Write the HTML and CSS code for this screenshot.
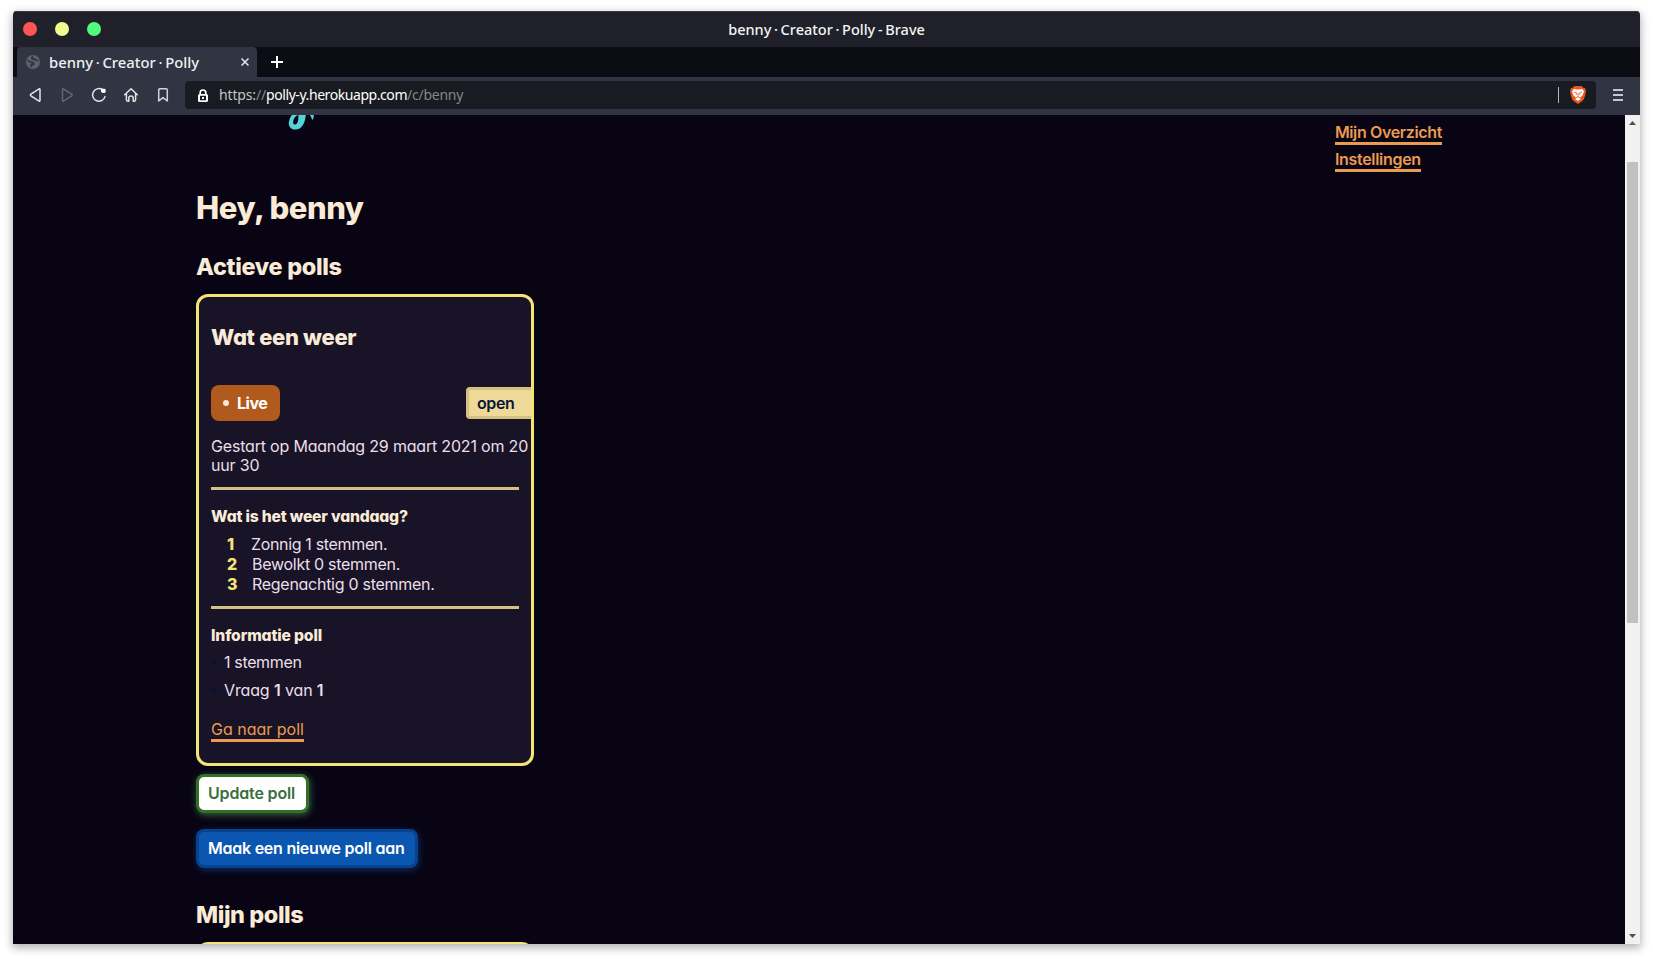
FILE: index.html
```html
<!DOCTYPE html>
<html lang="nl">
<head>
<meta charset="utf-8">
<title>benny · Creator · Polly</title>
<link rel="stylesheet" href="styles.css">
</head>
<body>
<div class="window">
  <div class="titlebar">
    <div class="lights"><i class="light red"></i><i class="light yellow"></i><i class="light green"></i></div>
    <div class="window-title">benny · Creator · Polly - Brave</div>
  </div>
  <div class="tabstrip">
    <div class="tab">
      <svg class="globe" width="14" height="14" viewBox="0 0 14 14"><circle cx="7" cy="7" r="7" fill="#5f6368"/><path d="M1.6 5.2Q4 7.6 6.6 7.3Q8 7.6 7.6 9.2L5.3 9.6V12.2M7.2 1.6Q5.2 2.6 6 3.8Q7.4 4.6 8.6 4Q9.4 5.8 12.4 5.6" fill="none" stroke="#313442" stroke-width="1.8"/></svg>
      <span class="tab-title">benny · Creator · Polly</span>
      <svg class="close" width="8" height="8" viewBox="0 0 8 8"><path d="M.5.5l7 7M7.5.5l-7 7" stroke="#e8e8ea" stroke-width="1.5"/></svg>
    </div>
    <svg class="plus" width="12" height="12" viewBox="0 0 12 12"><path d="M6 0v12M0 6h12" stroke="#fff" stroke-width="2"/></svg>
  </div>
  <div class="toolbar">
    <div class="tools">
      <svg width="16" height="16" viewBox="0 0 16 16"><path d="M12.100 1.800q.9-.4.9.6v11.200q0 1-.9.6L3.900 8.800q-1-.8 0-1.600z" fill="none" stroke="#e4e4e6" stroke-width="1.5"/></svg>
      <svg width="16" height="16" viewBox="0 0 16 16"><path d="M4.400 1.800q-.9-.4-.9.6v11.200q0 1 .9.6l8.200-5.400q1-.8 0-1.600z" fill="none" stroke="#636572" stroke-width="1.5"/></svg>
      <svg width="16" height="16" viewBox="0 0 16 16"><path d="M11.2 2.5A6.3 6.3 0 1 0 14 9.6" fill="none" stroke="#e4e4e6" stroke-width="1.5" stroke-linecap="round"/><path d="M10 1.7h3.4q1.2 0 1.2 1.2v1.5q0 1.6-1.6 1.6h-1q-1.8 0-1.9-1.8z" fill="#fff"/></svg>
      <svg width="16" height="16" viewBox="0 0 16 16"><path d="M1.7 7.8L8 1.7l6.3 6.1M3.4 6.8v6q0 1.4 1.2 1.4h1.2v-3.3q0-1.8 2.2-1.8t2.2 1.8v3.3h1.2q1.2 0 1.2-1.4v-6" fill="none" stroke="#e4e4e6" stroke-width="1.5" stroke-linejoin="round" stroke-linecap="round"/></svg>
      <svg width="16" height="16" viewBox="0 0 16 16"><path d="M3.7 14V3q0-1.2 1.2-1.2h6.2q1.2 0 1.2 1.2v11L8 10.6z" fill="none" stroke="#d4d4d8" stroke-width="1.5" stroke-linejoin="round"/></svg>
    </div>
    <div class="address">
      <svg class="lock" width="10" height="13" viewBox="0 0 10 13"><path d="M2.2 6V3.8Q2.2 1 5 1t2.8 2.8V6" fill="none" stroke="#fff" stroke-width="1.7"/><path fill-rule="evenodd" fill="#fff" d="M1.6 5h6.8Q10 5 10 6.6v4.8Q10 13 8.4 13H1.6Q0 13 0 11.4V6.6Q0 5 1.6 5zM2 6.8V11.2H8V6.8z"/><path d="M4 8h2v2H4z" fill="#fff"/></svg>
      <span class="url"><span class="scheme">https:<span class="dim">//</span></span><span class="host">polly-y.herokuapp.com</span><span class="path">/c/benny</span></span>
      <i class="divider"></i>
      <svg class="brave" width="16" height="18" viewBox="0 0 16 18"><path d="M4.5 0h7L13.3 1.8 15.2 2.2 16 5.2Q15.5 9 14 13 13.2 14.8 8 18 2.8 14.8 2 13 .5 9 0 5.2L.8 2.2 2.7 1.8z" fill="#e8571d"/><path d="M3.6 3L8 3.5 12.4 3 14 5.6 12.3 9.8 10 11.6 10.6 13.2 8 15 5.4 13.2 6 11.6 3.7 9.800 2 5.600z" fill="#fff"/><path d="M4 6l2.600.8-.6 2.300M12 6l-2.600.8.6 2.300M8 7v4M5.900 11.800L8 10.800l2.100 1" fill="none" stroke="#e8571d" stroke-width=".8"/></svg>
    </div>
    <svg class="menu" width="10" height="12" viewBox="0 0 10 12"><path d="M0 1h10M0 6h10M0 11h10" stroke="#c6c6cb" stroke-width="2"/></svg>
  </div>
  <div class="viewport">
    <div class="page">
      <header class="site-header">
        <svg class="logo" width="32" height="16" viewBox="0 0 32 16"><path fill-rule="evenodd" fill="#55d3d5" d="M3.8 0H17.8C17 8 14 14.6 7.6 14.6C2.2 14.6 .6 10.6 .8 7.4Q1.2 3 3.8 0zM10.5 0Q6 1.3 5.2 6.2Q4.8 9.6 7.2 9.6Q10.6 9 10.5 0z"/><path fill="#55d3d5" d="M22 0h3.8Q26.2 3 24.2 5Q23.2 1.5 22 0z"/></svg>
        <nav class="nav"><a href="#" class="link nav-overview">Mijn Overzicht</a><a href="#" class="link nav-settings">Instellingen</a></nav>
      </header>
      <main>
        <h1>Hey, benny</h1>
        <h2>Actieve polls</h2>
        <article class="card">
          <h3>Wat een weer</h3>
          <div class="status"><span class="live">Live</span><span class="state">open</span></div>
          <p class="started">Gestart op Maandag 29 maart 2021 om 20 uur 30</p>
          <hr>
          <h4 class="question">Wat is het weer vandaag?</h4>
          <ol class="answers">
            <li><b>1</b>Zonnig 1 stemmen.</li>
            <li><b>2</b>Bewolkt 0 stemmen.</li>
            <li><b>3</b>Regenachtig 0 stemmen.</li>
          </ol>
          <hr>
          <h4>Informatie poll</h4>
          <ul class="info">
            <li class="votes">1 stemmen</li>
            <li>Vraag <strong>1</strong> van <strong>1</strong></li>
          </ul>
          <a href="#" class="link goto">Ga naar poll</a>
        </article>
        <button class="btn update">Update poll</button>
        <button class="btn create">Maak een nieuwe poll aan</button>
        <h2 class="mine">Mijn polls</h2>
        <article class="card"></article>
      </main>
    </div>
    <div class="scrollbar">
      <svg width="7" height="4" viewBox="0 0 7 4"><path d="M0 4L3.5 0 7 4z" fill="#505050"/></svg>
      <i class="thumb"></i>
      <svg width="7" height="4" viewBox="0 0 7 4"><path d="M0 0h7L3.5 4z" fill="#505050"/></svg>
    </div>
  </div>
</div>
</body>
</html>
```
FILE: styles.css
```css
* { box-sizing: border-box; }
svg { display: block; flex: none; }
body {
  margin: 0;
  padding: 11px 13px 15px;
  height: 959px;
  overflow: hidden;
  background: #fff;
}
.window {
  height: 933px;
  display: flex;
  flex-direction: column;
  border-radius: 4px 4px 0 0;
  overflow: hidden;
  box-shadow: 0 3px 9px 1px rgba(0, 0, 0, .3);
  font-family: "Noto Sans", sans-serif;
}

/* Browser chrome */
.titlebar {
  height: 36px;
  flex: none;
  display: grid;
  grid-template-columns: 1fr auto 1fr;
  align-items: center;
  padding: 0 10px 1px;
  background: #20202a;
  border-top: 1px solid #343a44;
}
.lights { display: flex; gap: 18px; }
.light { width: 14px; height: 14px; border-radius: 50%; }
.red { background: #ff5555; }
.yellow { background: #f1fa8c; }
.green { background: #50fa7b; }
.window-title { padding-bottom: 1px; font-size: 14.5px; font-weight: 500; word-spacing: -1.1px; color: #f4f4f0; line-height: 20px; white-space: nowrap; }
.tabstrip { height: 30px; flex: none; display: flex; align-items: center; padding-left: 4px; background: #0b0c14; }
.tab {
  width: 240px;
  height: 30px;
  display: flex;
  align-items: center;
  padding: 0 8px 0 9px;
  background: #313442;
  border-radius: 4px 4px 0 0;
}
.tab-title { margin-left: 9px; font-size: 14.8px; font-weight: 500; word-spacing: -1.15px; color: #f0f0f2; line-height: 20px; white-space: nowrap; }
.close { margin-left: auto; }
.plus { margin-left: 14px; }
.toolbar { height: 38px; flex: none; display: flex; align-items: center; padding: 0 17px 2px 14px; background: #313442; }
.tools { display: flex; gap: 16px; }
.address {
  flex: 1;
  height: 28px;
  margin: 0 17px 0 14px;
  display: flex;
  align-items: center;
  padding: 0 10px 0 13px;
  background: #181b21;
  border-radius: 4px;
}
.url { margin-left: 11px; font-size: 14px; letter-spacing: -.43px; line-height: 20px; white-space: nowrap; color: #fff; }
.scheme { letter-spacing: -.15px; color: #c3c4c6; }
.dim, .path { color: #85878a; }
.path { letter-spacing: -.26px; }
.divider { width: 1px; height: 16px; margin: 0 11px 0 auto; background: #b9babc; }

/* Page */
.viewport { flex: 1; min-height: 0; display: flex; background: #080414; }
.page {
  flex: 1;
  height: 829px;
  overflow: hidden;
  padding-left: 183px;
  font: 16px/19px Inter, sans-serif;
  font-feature-settings: "cv11";
  color: #ebdfe8;
}
.site-header { height: 74px; display: flex; justify-content: space-between; padding: 0 183px 0 92px; }
.nav { display: flex; flex-direction: column; align-items: flex-start; gap: 5px; padding-top: 8px; font-weight: 600; }
.link { color: #eb9b50; text-decoration: none; border-bottom: 3px solid #eb9b50; }
.nav-overview { letter-spacing: -.36px; }
.nav-settings { letter-spacing: -.3px; }
h1, h2, h3, h4, p, ol, ul { margin: 0; padding: 0; }
h1, h2, h3, h4 { color: #faebd7; font-weight: 800; }
h1 { font-size: 31px; line-height: 38px; letter-spacing: -.45px; }
h2 { margin: 25px 0 13px; font-size: 23.4px; line-height: 29px; letter-spacing: -.3px; }
h3 { font-size: 22px; line-height: 27px; letter-spacing: -.32px; }
h4 { margin-top: 17px; font-size: 15.7px; line-height: 19px; letter-spacing: -.16px; }
.question { letter-spacing: -.2px; }
.card {
  width: 338px;
  min-height: 100px;
  padding: 27px 0 21px 12px;
  border: 3px solid #f4e476;
  border-radius: 12px;
  background: #181326;
}
.status { display: flex; justify-content: space-between; align-items: center; height: 36px; margin-top: 34px; }
.live {
  width: 69px;
  height: 36px;
  display: flex;
  align-items: center;
  padding-left: 12px;
  border-radius: 8px;
  background: #b05a1e;
  color: #fff;
  font-weight: 700;
  letter-spacing: -.5px;
}
.live::before { content: ""; width: 6px; height: 6px; margin-right: 8px; border-radius: 50%; background: #faebd7; }
.state {
  width: 65px;
  height: 32px;
  padding: 4px 0 0 8px;
  border: 3px solid #d6bf80;
  border-right: 0;
  border-radius: 4px 0 0 4px;
  background: #efd998;
  color: #061638;
  font-weight: 600;
  letter-spacing: -.37px;
}
.started { margin-top: 16px; letter-spacing: -.19px; }
hr { width: 308px; height: 3px; margin: 12px 0 0; border: 0; background: #d6c184; }
ol, ul { list-style: none; }
.answers { margin-top: 8px; line-height: 20px; letter-spacing: -.28px; }
.answers li { display: flex; padding-left: 16px; }
.answers b { width: 25px; color: #f4e476; font-weight: 800; }
.answers li:first-child { letter-spacing: -.34px; }
.answers li:first-child b { width: 24px; }
.info { margin-top: 8px; display: grid; gap: 9px; letter-spacing: -.13px; }
.info li { display: flex; align-items: center; white-space: pre; }
.info li::before { content: ""; width: 5px; height: 5px; margin-right: 8px; border-radius: 50%; background: #041638; }
.info strong { font-weight: 600; }
.info .votes { letter-spacing: -.35px; }
.goto { display: block; width: fit-content; margin-top: 20px; }
.btn {
  display: block;
  height: 39px;
  margin: 8px 0 0;
  padding: 7px 9px;
  border: 3px solid;
  border-radius: 8px;
  font: 600 16px/19px Inter, sans-serif;
  font-feature-settings: "cv11";
  text-align: left;
  white-space: nowrap;
}
.update { width: 113px; border-color: #317127; background: #fff; color: #3a6e3c; letter-spacing: -.165px; box-shadow: 1px 2px 7px rgba(70, 130, 75, .75); }
.create { width: 222px; margin-top: 16px; border-color: #08428a; background: #0b56b0; color: #fff; letter-spacing: -.247px; box-shadow: 1px 2px 7px rgba(11, 70, 150, .6); }
.mine { margin-top: 32px; letter-spacing: -.4px; }
.scrollbar { width: 15px; flex: none; display: flex; flex-direction: column; align-items: center; padding: 6px 0; background: #f1f1f1; }
.thumb { width: 11px; height: 461px; margin: 37px 0 auto; background: #c1c1c1; }
```
